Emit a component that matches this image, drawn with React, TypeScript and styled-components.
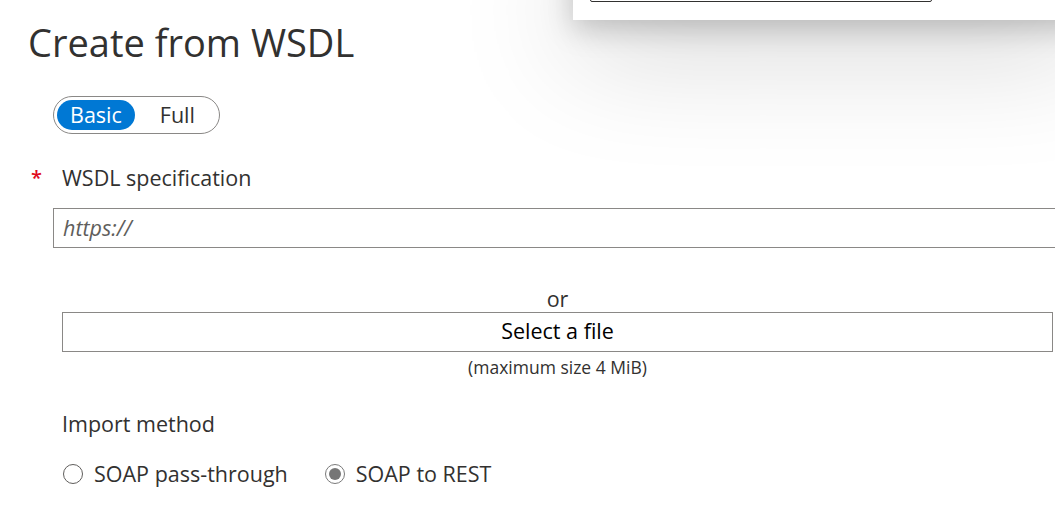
import React from "react";
import styled, { createGlobalStyle } from "styled-components";

const Global = createGlobalStyle`
  html, body { margin: 0; padding: 0; background: #ffffff; }
  body { font-family: "Open Sans", "Noto Sans", sans-serif; color: #323130; overflow: hidden; }
  * { box-sizing: border-box; }
`;

const Page = styled.div`
  position: relative;
  width: 1055px;
  height: 512px;
  overflow: hidden;
  background: #ffffff;
`;

const Content = styled.div`
  display: flex;
  flex-direction: column;
  padding: 16px 0 0 28px;
`;

const Title = styled.h1`
  margin: 0;
  font-size: 38px;
  font-weight: 400;
  line-height: 52px;
  color: #323130;
`;

const Toggle = styled.div`
  display: inline-flex;
  align-self: flex-start;
  align-items: center;
  margin: 28px 0 0 25px;
  padding: 3px;
  border: 1px solid #8a8886;
  border-radius: 20px;
  gap: 4px;
`;

const ToggleOption = styled.div<{ $active?: boolean }>`
  height: 30px;
  padding: 0 ${(p) => (p.$active ? "13px" : "21px")};
  border-radius: 15px;
  font-size: 21.5px;
  line-height: 30px;
  background: ${(p) => (p.$active ? "#0078d4" : "transparent")};
  color: ${(p) => (p.$active ? "#ffffff" : "#323130")};
`;

const FieldLabel = styled.div`
  display: flex;
  align-items: center;
  margin-top: 30px;
  font-size: 21.5px;
  line-height: 28px;
`;

const Required = styled.span`
  width: 34px;
  color: #e00b1c;
  font-size: 20px;
  font-weight: 600;
  padding-left: 3px;
`;

const UrlInput = styled.div`
  margin: 16px 0 0 25px;
  width: 1100px;
  height: 40px;
  border: 1px solid #8a8886;
  padding: 0 9px;
  font-size: 21.5px;
  line-height: 38px;
  font-style: italic;
  color: #605e5c;
`;

const FileArea = styled.div`
  display: flex;
  flex-direction: column;
  align-items: center;
  margin: 38px 0 0 34px;
  width: 991px;
`;

const OrText = styled.div`
  font-size: 21.5px;
  line-height: 26px;
  color: #323130;
`;

const FileButton = styled.div`
  width: 100%;
  height: 40px;
  border: 1px solid #8a8886;
  text-align: center;
  font-size: 21.5px;
  line-height: 36px;
  color: #000000;
`;

const Hint = styled.div`
  margin-top: 4px;
  font-size: 17.5px;
  line-height: 22px;
  color: #323130;
`;

const SectionLabel = styled.div`
  margin: 32px 0 0 34px;
  font-size: 21.5px;
  line-height: 28px;
`;

const RadioGroup = styled.div`
  display: flex;
  align-items: center;
  margin: 22px 0 0 35px;
  gap: 37px;
`;

const RadioItem = styled.label`
  display: flex;
  align-items: center;
  gap: 11px;
  font-size: 21.5px;
  line-height: 28px;
  color: #323130;
`;

const RadioCircle = styled.span<{ $checked?: boolean }>`
  position: relative;
  width: 20px;
  height: 20px;
  border-radius: 50%;
  border: 1px solid ${(p) => (p.$checked ? "#7a7a7a" : "#605e5c")};
  background: #ffffff;
  &::after {
    content: "";
    display: ${(p) => (p.$checked ? "block" : "none")};
    position: absolute;
    left: 3px;
    top: 3px;
    width: 12px;
    height: 12px;
    border-radius: 50%;
    background: #767676;
  }
`;

const Popup = styled.div`
  position: absolute;
  left: 573px;
  top: -60px;
  width: 520px;
  height: 80px;
  background: #ffffff;
  box-shadow: 0 8px 30px rgba(0, 0, 0, 0.22), 0 30px 120px rgba(0, 0, 0, 0.18);
  padding: 29px 0 0 17px;
`;

const PopupInput = styled.div`
  width: 342px;
  height: 33px;
  border: 1px solid #323130;
  border-radius: 2px;
`;

export default function App() {
  return (
    <Page>
      <Global />
      <Content>
        <Title>Create from WSDL</Title>
        <Toggle>
          <ToggleOption $active>Basic</ToggleOption>
          <ToggleOption>Full</ToggleOption>
        </Toggle>
        <FieldLabel>
          <Required>*</Required>
          WSDL specification
        </FieldLabel>
        <UrlInput>https://</UrlInput>
        <FileArea>
          <OrText>or</OrText>
          <FileButton>Select a file</FileButton>
          <Hint>(maximum size 4 MiB)</Hint>
        </FileArea>
        <SectionLabel>Import method</SectionLabel>
        <RadioGroup>
          <RadioItem>
            <RadioCircle />
            SOAP pass-through
          </RadioItem>
          <RadioItem>
            <RadioCircle $checked />
            SOAP to REST
          </RadioItem>
        </RadioGroup>
      </Content>
      <Popup>
        <PopupInput />
      </Popup>
    </Page>
  );
}
